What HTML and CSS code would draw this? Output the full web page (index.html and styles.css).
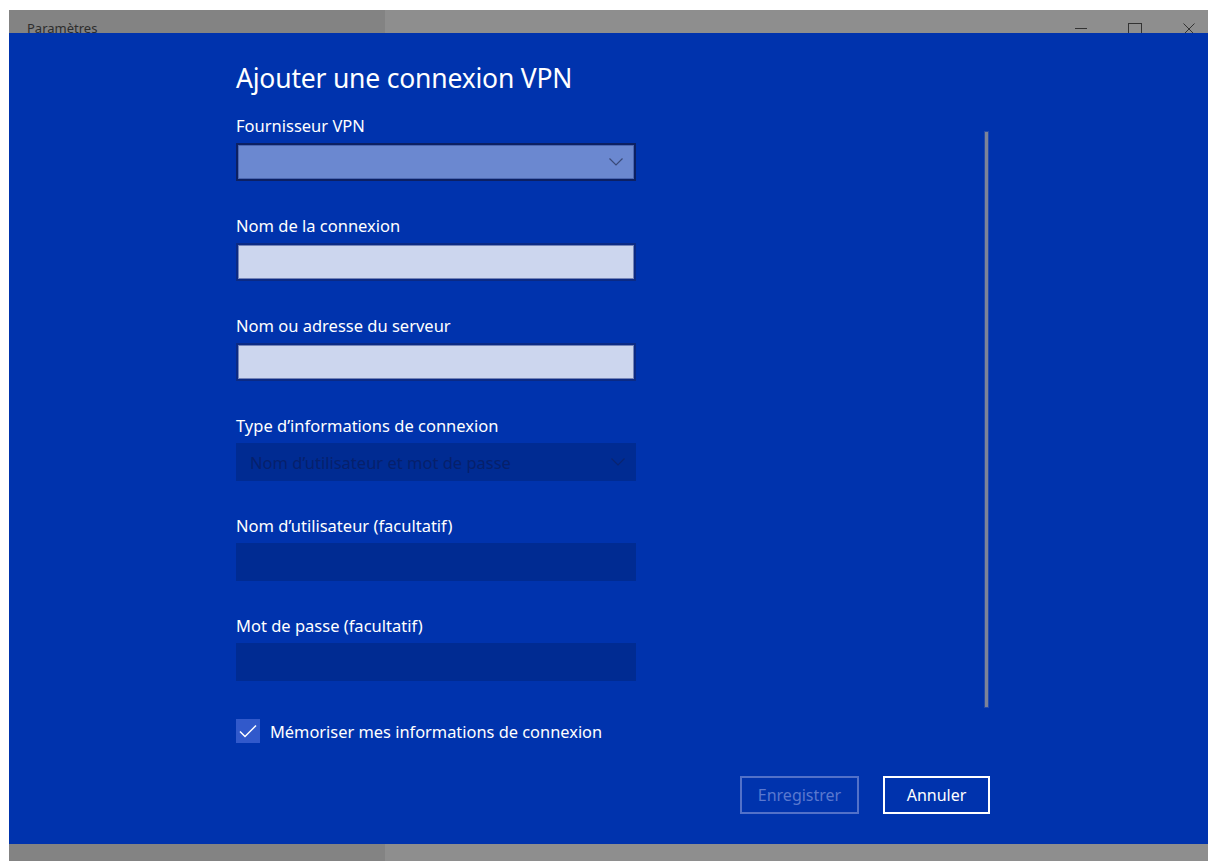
FILE: index.html
```html
<!DOCTYPE html>
<html lang="fr">
<head>
<meta charset="utf-8">
<title>Paramètres</title>
<link rel="stylesheet" href="styles.css">
</head>
<body>
<div class="screen">
  <div class="window">
    <div class="titlebar">
      <span class="title">Paramètres</span>
      <div class="controls">
        <span class="ctl ctl-min"></span>
        <span class="ctl ctl-max"></span>
        <span class="ctl ctl-close">
          <svg width="12" height="12" viewBox="0 0 12 12"><path d="M0.5 0.5 L11.5 11.5 M11.5 0.5 L0.5 11.5" stroke="#333" stroke-width="1" fill="none"/></svg>
        </span>
      </div>
    </div>

    <div class="panel">
      <div class="content">
        <div class="scroll-area">
          <div class="form">
            <h1 class="heading">Ajouter une connexion VPN</h1>

            <div class="field">
              <label class="label">Fournisseur VPN</label>
              <div class="select select-active">
                <span class="select-text"></span>
                <svg class="chevron" width="14" height="8" viewBox="0 0 14 8"><path d="M0.5 0.5 L7 7 L13.5 0.5" stroke="#3a4a78" stroke-width="1.2" fill="none"/></svg>
              </div>
            </div>

            <div class="field">
              <label class="label">Nom de la connexion</label>
              <div class="input"></div>
            </div>

            <div class="field">
              <label class="label">Nom ou adresse du serveur</label>
              <div class="input"></div>
            </div>

            <div class="field">
              <label class="label">Type d’informations de connexion</label>
              <div class="select select-disabled">
                <span class="select-text">Nom d’utilisateur et mot de passe</span>
                <svg class="chevron" width="14" height="8" viewBox="0 0 14 8"><path d="M0.5 0.5 L7 7 L13.5 0.5" stroke="#0a2470" stroke-width="1.2" fill="none"/></svg>
              </div>
            </div>

            <div class="field">
              <label class="label">Nom d’utilisateur (facultatif)</label>
              <div class="input input-disabled"></div>
            </div>

            <div class="field">
              <label class="label">Mot de passe (facultatif)</label>
              <div class="input input-disabled"></div>
            </div>
          </div>
          <div class="scrollbar"></div>
        </div>

        <div class="check-row">
          <span class="checkbox">
            <svg width="18" height="14" viewBox="0 0 18 14"><path d="M1 7.5 L6 12.5 L17 1.5" stroke="#fff" stroke-width="1.5" fill="none"/></svg>
          </span>
          <span class="check-label">Mémoriser mes informations de connexion</span>
        </div>

        <div class="actions">
          <button class="btn btn-disabled">Enregistrer</button>
          <button class="btn btn-primary">Annuler</button>
        </div>
      </div>
    </div>

    <div class="bottombar"></div>
  </div>
</div>
</body>
</html>
```

FILE: styles.css
```css
* { box-sizing: border-box; }

html, body {
  margin: 0;
  padding: 0;
  background: #ffffff;
}

body {
  font-family: "Noto Sans", "Open Sans", "Liberation Sans", sans-serif;
  width: 1208px;
  height: 861px;
  overflow: hidden;
}

.screen {
  padding: 10px 0 0 9px;
}

.window {
  width: 1199px;
  display: flex;
  flex-direction: column;
}

/* grey caption strip, partly hidden under the blue panel */
.titlebar {
  height: 23px;
  overflow: hidden;
  display: flex;
  justify-content: space-between;
  background: linear-gradient(to right, #838383 0, #838383 376px, #8e8e8e 376px);
}

.title {
  font-size: 13px;
  line-height: 16px;
  color: #2d2d2d;
  padding: 10px 0 0 18px;
}

.controls {
  display: flex;
  gap: 16px;
}

.ctl {
  width: 38px;
  height: 23px;
  display: flex;
  justify-content: center;
}

.ctl-min::before {
  content: "";
  width: 12px;
  height: 1px;
  background: #333;
  margin-top: 18px;
}

.ctl-max::before {
  content: "";
  width: 12px;
  height: 12px;
  border: 1px solid #333;
  margin-top: 13px;
}

.ctl-close svg {
  margin-top: 13px;
}

.panel {
  height: 811px;
  background: #0033ad;
  padding-left: 227px;
}

.content {
  width: 754px;
  display: flex;
  flex-direction: column;
}

.scroll-area {
  display: flex;
  height: 686px;
}

.form {
  width: 400px;
  display: flex;
  flex-direction: column;
}

.heading {
  margin: 25px 0 18px;
  font-size: 26.5px;
  line-height: 40px;
  font-weight: 400;
  color: #ffffff;
  letter-spacing: -0.2px;
}

.field {
  display: flex;
  flex-direction: column;
  gap: 7px;
  margin-bottom: 35px;
}

.label {
  font-size: 16.5px;
  line-height: 20px;
  color: #ffffff;
}

.select,
.input {
  height: 38px;
  width: 400px;
}

.select {
  display: flex;
  align-items: center;
  justify-content: space-between;
  padding: 0 11px 0 14px;
}

.select-active {
  background: #6b88d0;
  border: 2px solid #0c2063;
  box-shadow: inset 0 0 0 1px #4a66b0;
}

.select-disabled {
  background: #002b92;
}

.select-text {
  font-size: 16.5px;
  color: #06206c;
}

.input {
  background: #ccd6ee;
  border: 2px solid #0b2a84;
  box-shadow: inset 0 0 0 1px #7384b8;
}

.input-disabled {
  background: #002b92;
  border: none;
  box-shadow: none;
}

.scrollbar {
  width: 3px;
  height: 575px;
  margin: 99px 2px 0 auto;
  background: #7c8398;
  box-shadow: 0 0 0 1px rgba(60, 90, 170, 0.6);
}

.check-row {
  display: flex;
  align-items: center;
  gap: 10px;
  height: 24px;
}

.checkbox {
  width: 24px;
  height: 24px;
  background: #3159cb;
  display: flex;
  align-items: center;
  justify-content: center;
}

.check-label {
  font-size: 16.4px;
  color: #ffffff;
}

.actions {
  display: flex;
  justify-content: flex-end;
  gap: 24px;
  margin-top: 33px;
}

.btn {
  height: 38px;
  font-family: inherit;
  font-size: 16px;
  background: transparent;
  border: 2px solid;
  padding: 0;
}

.btn-disabled {
  width: 119px;
  border-color: #5271c9;
  color: #5a78cf;
}

.btn-primary {
  width: 107px;
  border-color: #ffffff;
  color: #ffffff;
}

.bottombar {
  height: 17px;
  background: linear-gradient(to right, #838383 0, #838383 376px, #8e8e8e 376px);
}
```
